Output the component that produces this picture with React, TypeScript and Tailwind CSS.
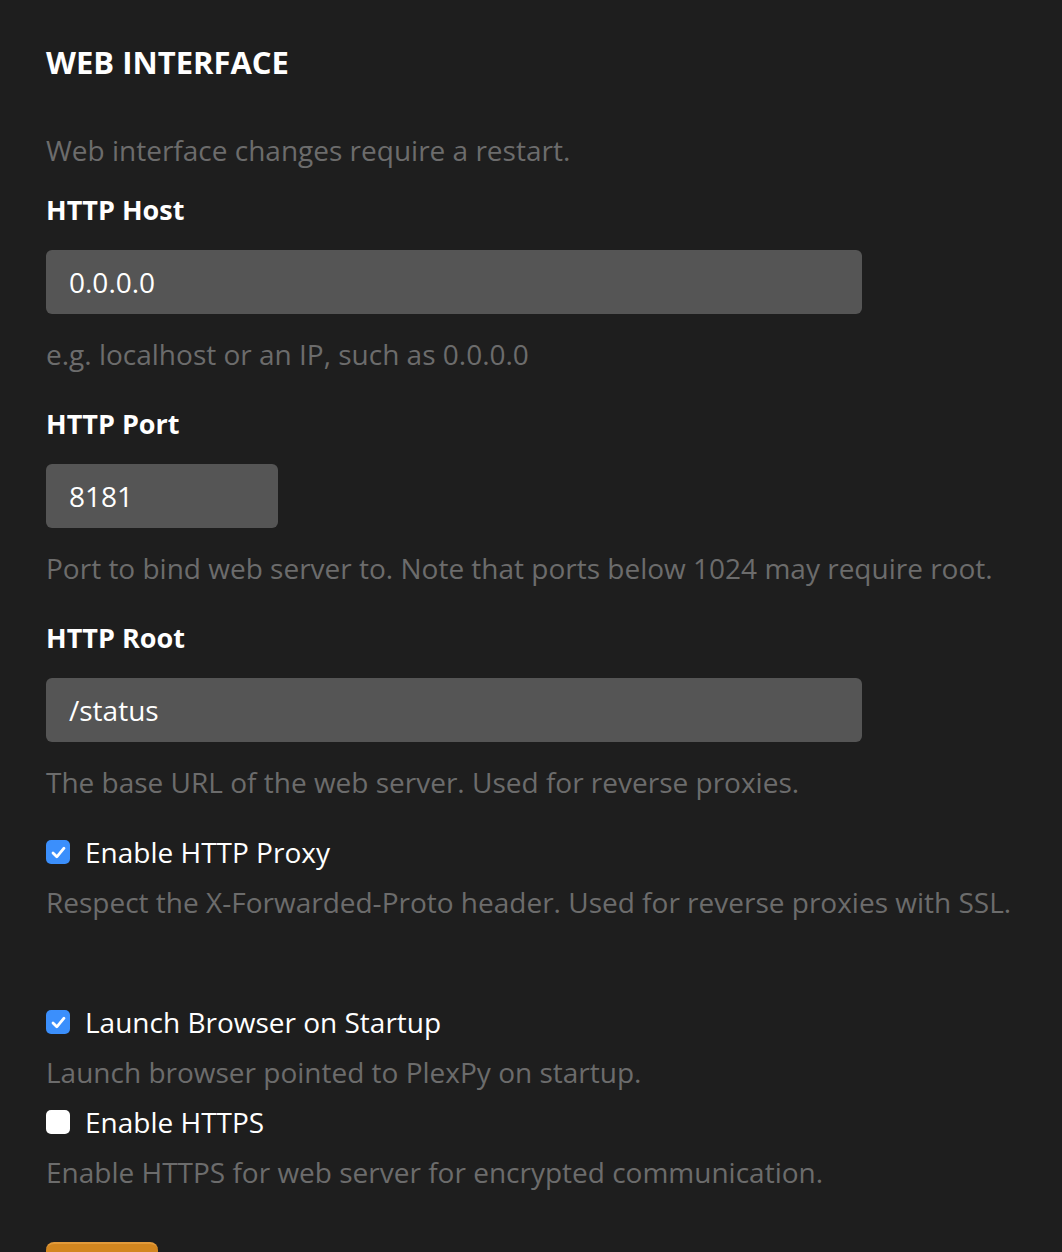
import React from "react";

function Check({ checked }: { checked: boolean }) {
  return checked ? (
    <span className="flex h-[24px] w-[24px] items-center justify-center rounded-[5px] bg-[#3b8ffc]">
      <svg width="15" height="13" viewBox="0 0 15 13" fill="none">
        <path d="M2 7 L5.8 10.8 L13 2.2" stroke="white" strokeWidth="2.8" strokeLinecap="round" strokeLinejoin="round" />
      </svg>
    </span>
  ) : (
    <span className="h-[24px] w-[24px] rounded-[5px] bg-white" />
  );
}

function Help({ children, className = "" }: { children: React.ReactNode; className?: string }) {
  return <p className={`text-[28px] leading-[40px] text-[#6c6c6c] ${className}`}>{children}</p>;
}

function Label({ children, className = "" }: { children: React.ReactNode; className?: string }) {
  return <label className={`block text-[27px] font-bold leading-[40px] text-white ${className}`}>{children}</label>;
}

function Input({ value, w }: { value: string; w: string }) {
  return (
    <div className={`flex h-[64px] items-center rounded-[6px] bg-[#555555] px-[23px] text-[28px] text-white ${w}`}>
      {value}
    </div>
  );
}

export default function App() {
  return (
    <div
      className="h-[1252px] overflow-hidden bg-[#1e1e1e] px-[46px] pt-[40px]"
      style={{ fontFamily: '"Open Sans", sans-serif' }}
    >
      <h2 className="text-[31px] font-bold leading-[44px] text-white">WEB INTERFACE</h2>
      <Help className="mt-[46px]">Web interface changes require a restart.</Help>
      <Label className="mt-[20px]">HTTP Host</Label>
      <div className="mt-[20px]">
        <Input value="0.0.0.0" w="w-[816px]" />
      </div>
      <Help className="mt-[20px]">e.g. localhost or an IP, such as 0.0.0.0</Help>
      <Label className="mt-[30px]">HTTP Port</Label>
      <div className="mt-[20px]">
        <Input value="8181" w="w-[232px]" />
      </div>
      <Help className="mt-[20px]">Port to bind web server to. Note that ports below 1024 may require root.</Help>
      <Label className="mt-[30px]">HTTP Root</Label>
      <div className="mt-[20px]">
        <Input value="/status" w="w-[816px]" />
      </div>
      <Help className="mt-[20px]">The base URL of the web server. Used for reverse proxies.</Help>
      <div className="mt-[30px] flex h-[40px] items-center gap-[15px]">
        <Check checked />
        <span className="text-[28px] text-white">Enable HTTP Proxy</span>
      </div>
      <Help className="mt-[10px]">Respect the X-Forwarded-Proto header. Used for reverse proxies with SSL.</Help>
      <div className="mt-[80px] flex h-[40px] items-center gap-[15px]">
        <Check checked />
        <span className="text-[28px] text-white">Launch Browser on Startup</span>
      </div>
      <Help className="mt-[10px]">Launch browser pointed to PlexPy on startup.</Help>
      <div className="mt-[10px] flex h-[40px] items-center gap-[15px]">
        <Check checked={false} />
        <span className="text-[28px] text-white">Enable HTTPS</span>
      </div>
      <Help className="mt-[10px]">Enable HTTPS for web server for encrypted communication.</Help>
      <div className="mt-[50px] h-[64px] w-[112px] rounded-[8px] border-t-[2px] border-[#e39a3a] bg-[#d3861f]" />
    </div>
  );
}
